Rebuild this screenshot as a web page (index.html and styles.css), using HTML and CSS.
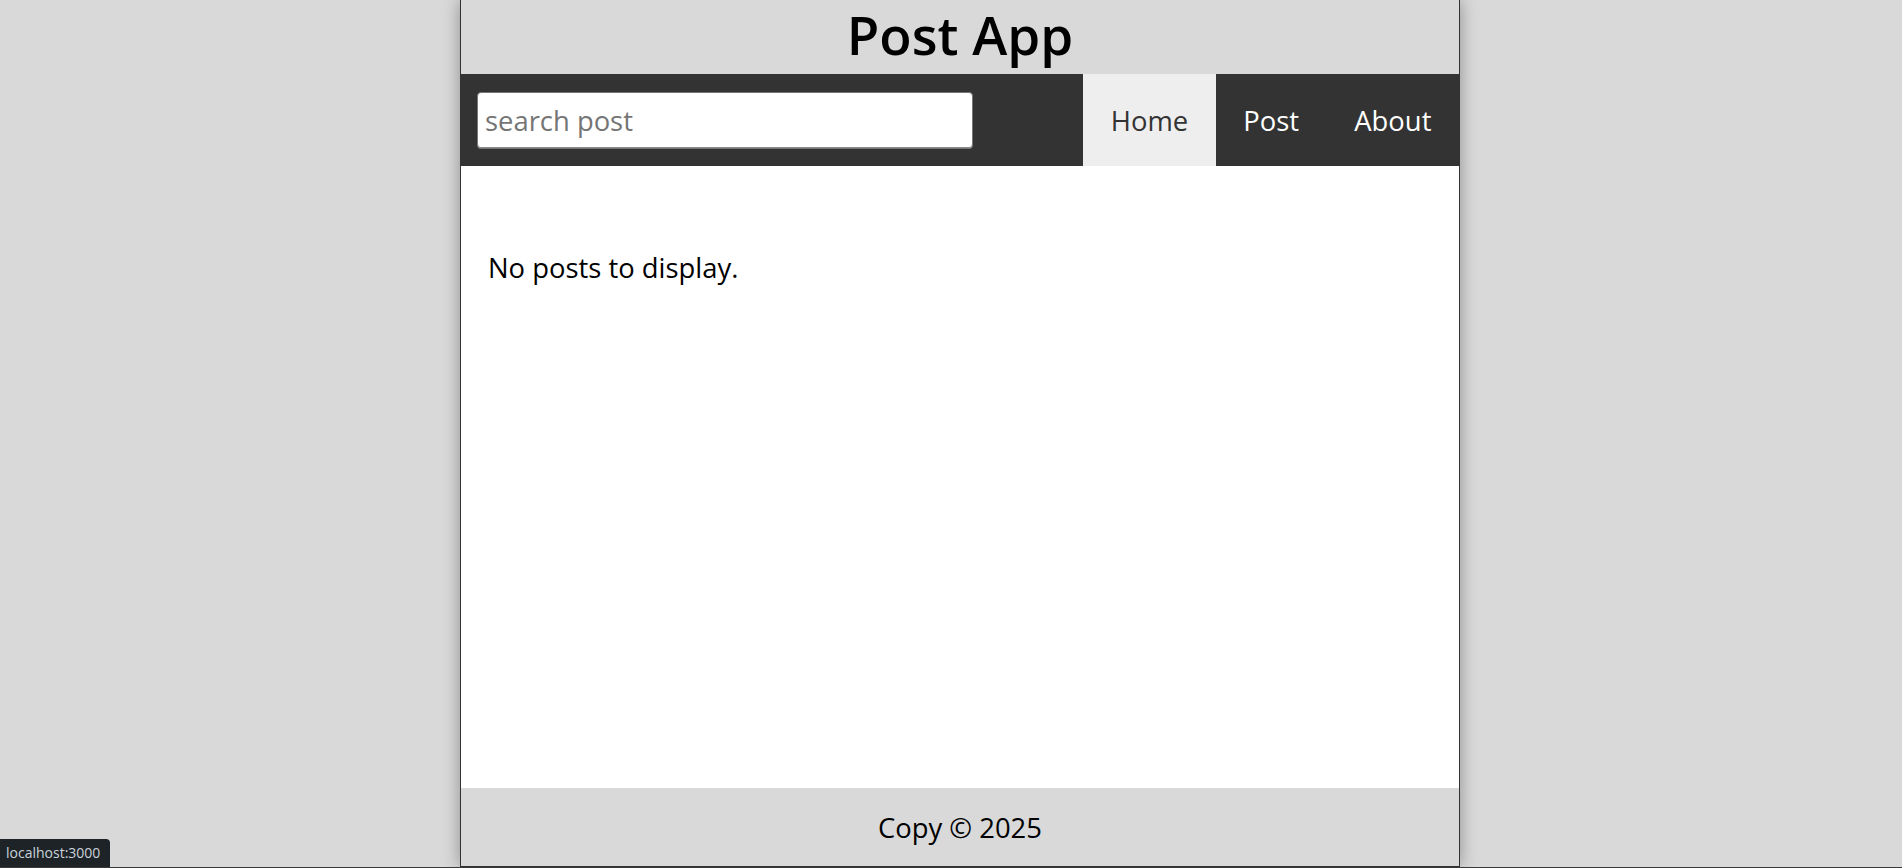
FILE: index.html
```html
<!DOCTYPE html>
<html lang="en">
<head>
<meta charset="utf-8">
<title>Post App</title>
<link rel="stylesheet" href="styles.css">
</head>
<body>
<div class="app">
  <header class="header">
    <h1 class="title">Post App</h1>
  </header>
  <nav class="nav">
    <form class="search" onsubmit="return false">
      <input class="search-input" type="text" placeholder="search post">
    </form>
    <ul class="links">
      <li><a class="link active" href="#">Home</a></li>
      <li><a class="link" href="#">Post</a></li>
      <li><a class="link" href="#">About</a></li>
    </ul>
  </nav>
  <main class="main">
    <p class="empty">No posts to display.</p>
  </main>
  <footer class="footer">
    <p class="copy">Copy &copy; 2025</p>
  </footer>
</div>
<div class="status">localhost:3000</div>
<div class="chrome-edge"></div>
</body>
</html>
```

FILE: styles.css
```css
* {
  box-sizing: border-box;
}

html, body {
  margin: 0;
  padding: 0;
}

body {
  background: #d9d9d9;
  font-family: "Open Sans", "Noto Sans", sans-serif;
  font-size: 27.4px;
  color: #000;
  padding-left: 18px;
}

.app {
  width: 1000px;
  margin: 0 auto;
  min-height: calc(100vh - 1px);
  background: #fff;
  border: 1px solid #333;
  border-top: none;
  display: flex;
  flex-direction: column;
  box-shadow: 0 0 16px rgba(0, 0, 0, 0.35);
}

.header {
  height: 74px;
  background: #d9d9d9;
  display: flex;
  justify-content: center;
  align-items: flex-start;
}

.title {
  margin: 0;
  font-size: 53px;
  font-weight: 600;
  line-height: 1;
  padding-top: 8px;
}

.nav {
  height: 92px;
  background: #333;
  display: flex;
  align-items: center;
  justify-content: space-between;
  padding-left: 16px;
}

.search {
  margin: 0;
  display: flex;
}

.search-input {
  width: 496px;
  height: 57px;
  border: 1px solid #767676;
  border-radius: 4px;
  padding: 0 7px;
  font-family: inherit;
  font-size: 27.4px;
  color: #222;
  background: #fff;
  box-shadow: inset 0 -1px 0 #8a8a8a;
}

.search-input::placeholder {
  color: #757575;
}

.links {
  list-style: none;
  margin: 0;
  padding: 0;
  display: flex;
  height: 100%;
}

.links li {
  display: flex;
}

.link {
  display: flex;
  align-items: center;
  padding: 0 27.6px;
  color: #fff;
  text-decoration: none;
  font-size: 27.4px;
}

.link.active {
  background: #eee;
  color: #333;
}

.main {
  flex: 1;
  padding: 83px 27px 30px 27px;
}

.empty {
  margin: 0;
  line-height: 1.36;
}

.footer {
  height: 78px;
  background: #d9d9d9;
  display: flex;
  justify-content: center;
  align-items: center;
}

.copy {
  margin: 0;
}

.status {
  position: fixed;
  left: 0;
  bottom: 0;
  height: 29px;
  padding: 0 10px 0 6px;
  background: #1e2327;
  color: #c9d3dc;
  font-family: "Open Sans", sans-serif;
  font-size: 14px;
  line-height: 27px;
  border-top-right-radius: 4px;
}

.chrome-edge {
  position: fixed;
  left: 0;
  right: 0;
  bottom: 0;
  height: 1px;
  background: #3a3a3a;
}
```
